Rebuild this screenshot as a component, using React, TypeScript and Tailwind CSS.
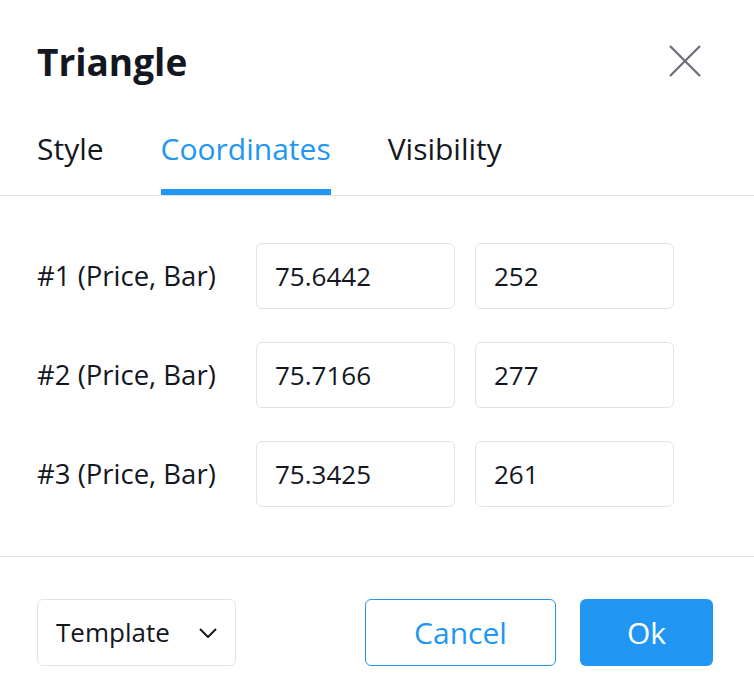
import { useState } from 'react'

const rows = [
  { label: '#1 (Price, Bar)', price: '75.6442', bar: '252' },
  { label: '#2 (Price, Bar)', price: '75.7166', bar: '277' },
  { label: '#3 (Price, Bar)', price: '75.3425', bar: '261' },
]

const tabs = ['Style', 'Coordinates', 'Visibility']

export default function App() {
  const [active, setActive] = useState('Coordinates')

  return (
    <div
      className="w-[754px] h-[700px] bg-white text-[#131722] overflow-hidden"
      style={{ fontFamily: '"Open Sans", "DejaVu Sans", sans-serif' }}
    >
      {/* header */}
      <div className="h-[122px] flex items-center justify-between pl-[37px] pr-[48px]">
        <h1 className="text-[37px] font-bold leading-none">Triangle</h1>
        <button className="w-[42px] h-[42px] flex items-center justify-center text-[#6a6d78]">
          <svg width="34" height="34" viewBox="0 0 34 34" fill="none" stroke="currentColor" strokeWidth="2.2">
            <path d="M2 2 L32 32 M32 2 L2 32" />
          </svg>
        </button>
      </div>

      {/* tabs */}
      <div className="h-[74px] flex gap-[57px] px-[37px] border-b border-[#e0e3eb]">
        {tabs.map((t) => (
          <button
            key={t}
            onClick={() => setActive(t)}
            className="flex flex-col pt-[7px]"
          >
            <span
              className={
                'text-[30px] leading-[40px] ' +
                (active === t ? 'text-[#2196f3]' : 'text-[#131722]')
              }
            >
              {t}
            </span>
            <span
              className={
                'mt-[20px] h-[6px] w-full ' + (active === t ? 'bg-[#2196f3]' : 'bg-transparent')
              }
            />
          </button>
        ))}
      </div>

      {/* coordinates */}
      <div className="h-[361px] pt-[47px] px-[37px] flex flex-col gap-[33px] border-b border-[#e0e3eb]">
        {rows.map((r) => (
          <div key={r.label} className="flex items-center h-[66px]">
            <div className="w-[219px] text-[27.5px]">{r.label}</div>
            <input
              defaultValue={r.price}
              className="w-[199px] h-[66px] px-[18px] text-[26px] border border-[#e0e3eb] rounded-[6px] outline-none"
            />
            <input
              defaultValue={r.bar}
              className="ml-[20px] w-[199px] h-[66px] px-[18px] text-[26px] border border-[#e0e3eb] rounded-[6px] outline-none"
            />
          </div>
        ))}
      </div>

      {/* footer */}
      <div className="flex items-center pt-[42px] pl-[37px] pr-[41px]">
        <button className="w-[199px] h-[67px] flex items-center justify-between pl-[18px] pr-[18px] border border-[#e0e3eb] rounded-[6px] text-[26px]">
          <span>Template</span>
          <svg width="18" height="10" viewBox="0 0 18 10" fill="none" stroke="#131722" strokeWidth="2">
            <path d="M1 1 L9 9 L17 1" />
          </svg>
        </button>
        <div className="ml-auto flex gap-[24px]">
          <button className="w-[191px] h-[67px] border border-[#2196f3] rounded-[6px] text-[#2196f3] text-[30px]">
            Cancel
          </button>
          <button className="w-[133px] h-[67px] bg-[#2196f3] rounded-[6px] text-white text-[30px]">
            Ok
          </button>
        </div>
      </div>
    </div>
  )
}
